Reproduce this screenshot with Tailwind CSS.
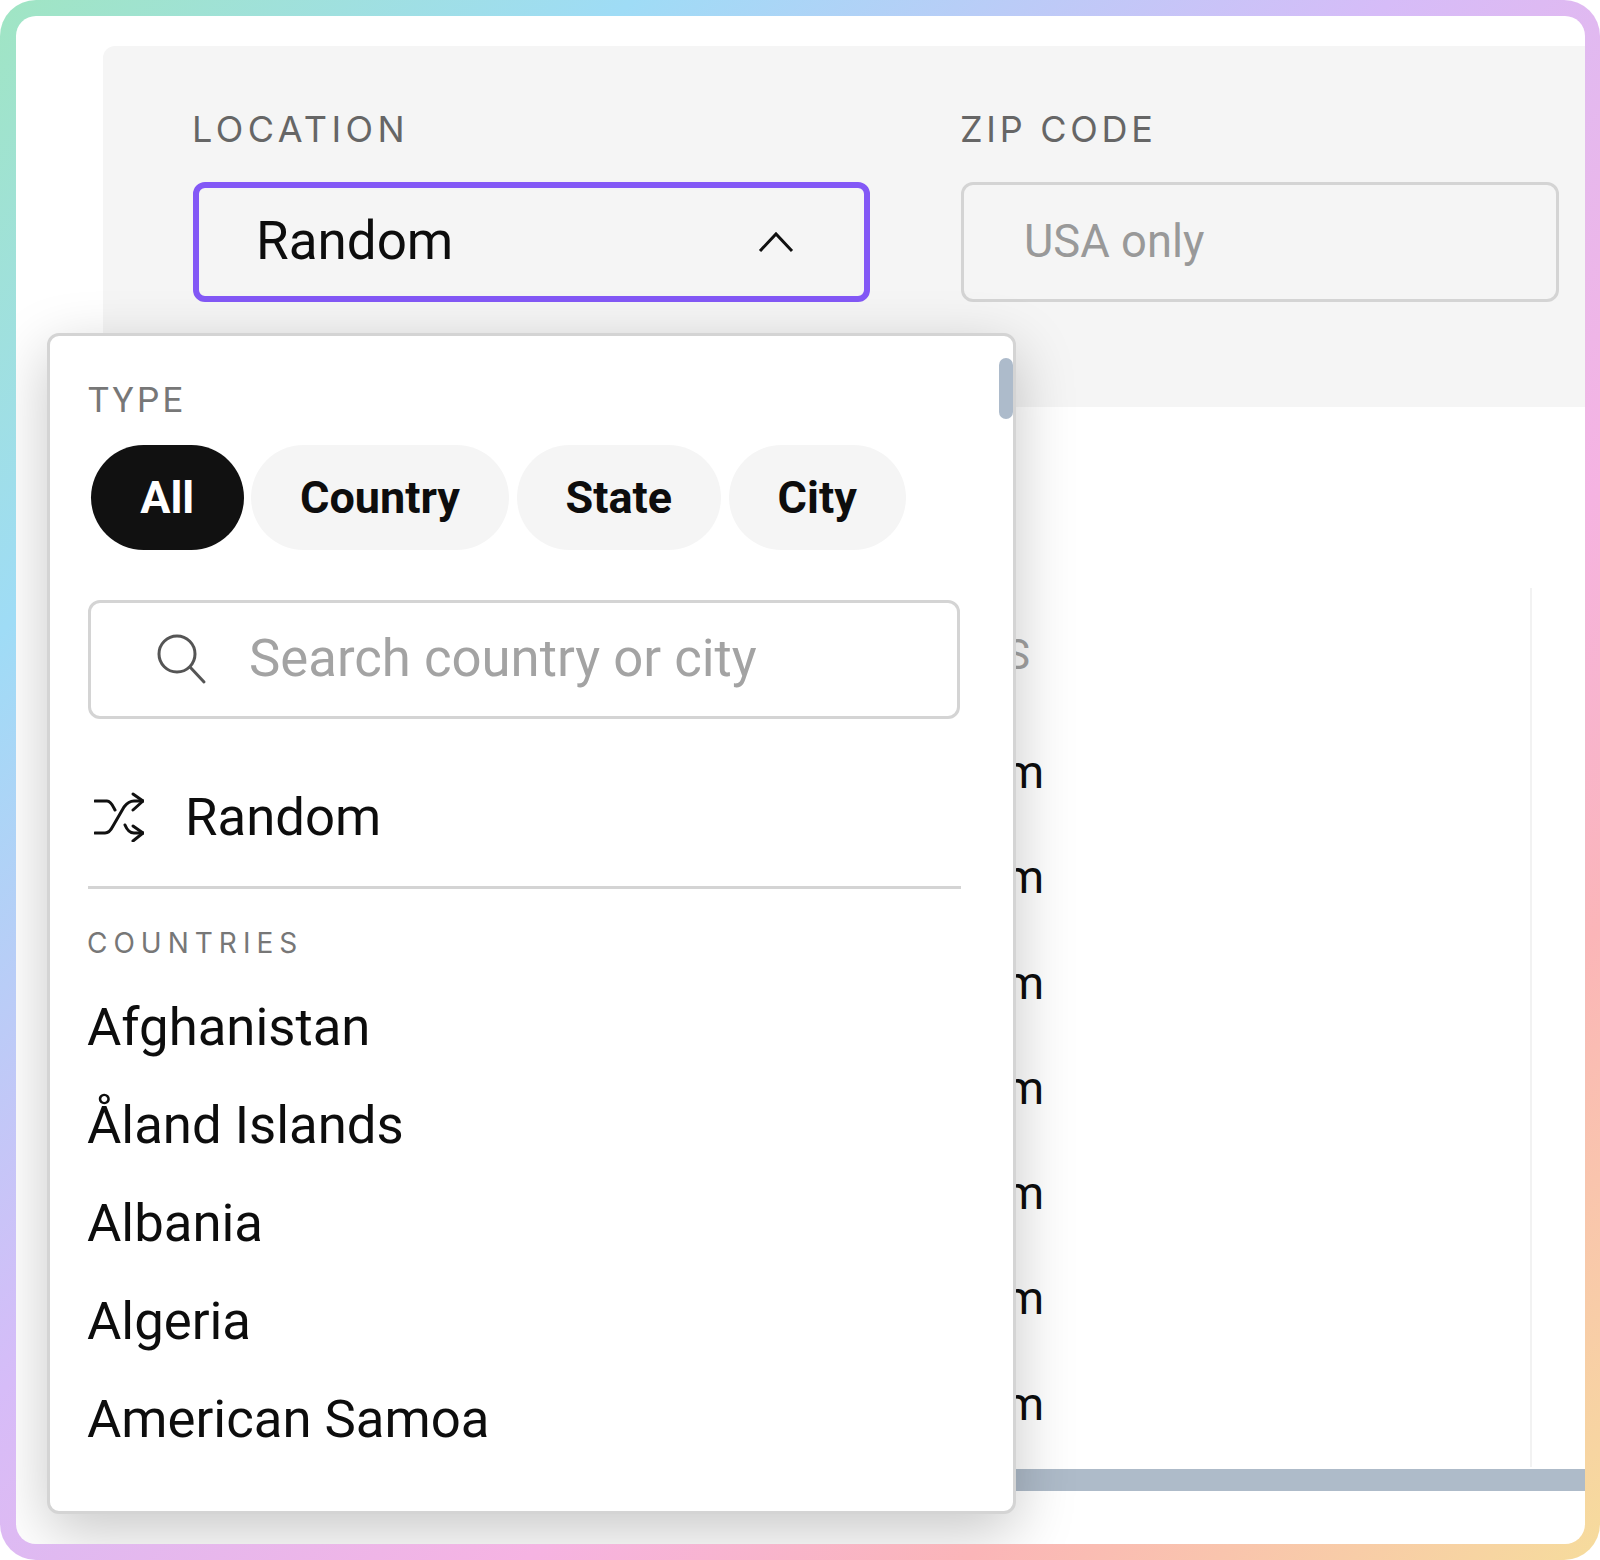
<!DOCTYPE html>
<html lang="en">
<head>
    <meta charset="UTF-8">
    <meta name="viewport" content="width=device-width, initial-scale=1.0">
    <title>Location picker</title>
    <script src="https://cdn.jsdelivr.net/npm/@tailwindcss/browser@4"></script>
</head>
<body class="font-['Roboto',sans-serif]">
    <div class="w-[1600px] h-[1560px] pl-4 pr-[15px] py-4 rounded-[36px] bg-[linear-gradient(135deg,#a0e5c3_0%,#9fdcf6_20%,#d6bcf8_44%,#f6b3e2_66%,#fbb5b8_80%,#f6dc9c_100%)]">
        <div class="relative w-full h-full bg-white rounded-[20px] overflow-hidden">

            <!-- form panel -->
            <div class="ml-[87px] mt-[30px] h-[361px] pl-[90px] pt-[65px] flex gap-[91px] bg-[#f5f5f5] rounded-tl-[12px] rounded-bl-[4px]">
                <div class="w-[677px]">
                    <div class="-ml-[1px] h-[36px] leading-[36px] text-[36px] font-['Inter',sans-serif] tracking-[4.4px] text-[#666666]">LOCATION</div>
                    <div class="mt-[35px] h-[120px] pl-[57px] pr-[70px] flex items-center justify-between border-[6px] border-[#8358f6] rounded-[12px]">
                        <span class="text-[53px] text-[#0d0d0d]">Random</span>
                        <svg class="w-[36px] h-[22px]" viewBox="0 0 36 22" fill="none" stroke="#111111" stroke-width="3">
                            <path d="M2 20 18 3 34 20"/>
                        </svg>
                    </div>
                </div>
                <div class="w-[598px]">
                    <div class="-ml-[1px] h-[36px] leading-[36px] text-[36px] font-['Inter',sans-serif] tracking-[3.7px] text-[#666666]">ZIP CODE</div>
                    <div class="mt-[35px] h-[120px] pl-[60px] flex items-center border-[3px] border-[#d4d4d4] rounded-[12px]">
                        <span class="text-[45.3px] text-[#999999]">USA only</span>
                    </div>
                </div>
            </div>

            <!-- results table behind the dropdown -->
            <div class="ml-[87px] mt-[181px]">
                <div class="w-[1429px] h-[879px] border-r-2 border-[#f2f2f2]">
                    <div class="w-[941px] h-[132px] pr-[14px] flex items-center justify-end text-[42px] text-[#a3a3a3]">LOCATIONS</div>
                    <div class="w-[941px] text-right text-[46px] leading-[105.3px] text-[#0d0d0d]">
                        <div>Random</div>
                        <div>Random</div>
                        <div>Random</div>
                        <div>Random</div>
                        <div>Random</div>
                        <div>Random</div>
                        <div>Random</div>
                    </div>
                </div>
                <div class="mt-[2px] h-[22px] bg-[#aebbc9]"></div>
            </div>

            <!-- dropdown -->
            <div class="absolute left-[31px] top-[317px] w-[969px] h-[1181px] px-[37px] pt-[47px] bg-white border-[3px] border-[#d4d4d4] rounded-[12px] shadow-[0_18px_60px_rgba(0,0,0,0.22)]">
                <div class="ml-[1px] h-[36px] leading-[36px] text-[35px] tracking-[3.4px] text-[#777777]">TYPE</div>
                <div class="mt-[26px] ml-[4px] flex gap-[7.5px]">
                    <button class="h-[105px] w-[152.5px] rounded-full bg-[#111111] text-white text-[45px] font-bold">All</button>
                    <button class="h-[105px] px-[49px] rounded-full bg-[#f5f5f5] text-[#0d0d0d] text-[45px] font-bold">Country</button>
                    <button class="h-[105px] px-[49px] rounded-full bg-[#f5f5f5] text-[#0d0d0d] text-[45px] font-bold">State</button>
                    <button class="h-[105px] px-[49px] rounded-full bg-[#f5f5f5] text-[#0d0d0d] text-[45px] font-bold">City</button>
                </div>
                <div class="mt-[50px] ml-[1px] w-[872px] h-[119px] pl-[66px] pb-[2px] flex items-center gap-[40px] border-[3px] border-[#d4d4d4] rounded-[12px]">
                    <svg class="w-[52px] h-[54px] shrink-0" viewBox="0 0 52 54" fill="none" stroke="#555555" stroke-width="3">
                        <circle cx="20" cy="22" r="18"/>
                        <path d="M33 35 47 50" stroke-linecap="round"/>
                    </svg>
                    <span class="text-[52.7px] text-[#a3a3a3]">Search country or city</span>
                </div>
                <div class="mt-[66px] ml-[7px] h-[64px] flex items-center gap-[41px]">
                    <svg class="w-[50px] h-[50px] shrink-0" viewBox="0 0 50 50" fill="none" stroke="#111111" stroke-width="3" stroke-linecap="round" stroke-linejoin="round">
                        <path d="M1 9H13C17 9 19 14 21 18"/>
                        <path d="M1 41H11C15 41 17 38 19 34L30 15C33 11 36 9 40 9H49"/>
                        <path d="M39 2 49 9 39 18"/>
                        <path d="M31 33C33 38 36 41 40 41H49"/>
                        <path d="M39 34 49 41 39 49"/>
                    </svg>
                    <span class="text-[52.7px] leading-[64px] text-[#0d0d0d]">Random</span>
                </div>
                <div class="mt-[37px] ml-[1px] w-[873px] h-[3px] bg-[#d4d4d4]"></div>
                <div class="mt-[39px] h-[30px] leading-[30px] text-[28px] font-['Inter',sans-serif] tracking-[6px] text-[#777777]">COUNTRIES</div>
                <div class="mt-[20px] text-[52.7px] leading-[98px] text-[#0d0d0d]">
                    <div>Afghanistan</div>
                    <div>Åland Islands</div>
                    <div>Albania</div>
                    <div>Algeria</div>
                    <div>American Samoa</div>
                </div>
                <div class="absolute right-0 top-[22px] w-[14px] h-[61px] rounded-full bg-[#adbbcb]"></div>
            </div>
        </div>
    </div>
</body>
</html>
